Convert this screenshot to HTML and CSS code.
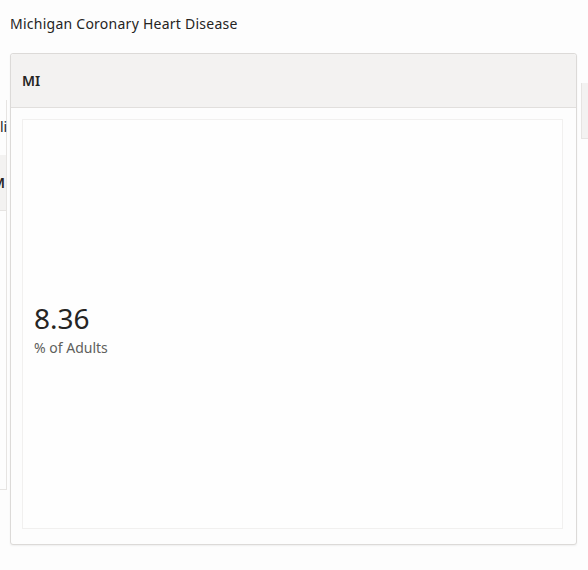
FILE: index.html
```html
<!DOCTYPE html>
<html lang="en">
<head>
  <meta charset="UTF-8" />
  <meta name="viewport" content="width=device-width, initial-scale=1" />
  <title>Michigan Coronary Heart Disease</title>
  <link rel="stylesheet" href="styles.css">
</head>
<body>
  <!-- panels of the report behind the popup -->
  <div class="backdrop">
    <div class="back-left">
      <span class="back-label">li</span>
      <div class="back-head"><span>M</span></div>
    </div>
    <div class="back-right"></div>
  </div>

  <h1 class="page-title">Michigan Coronary Heart Disease</h1>

  <div class="popup">
    <div class="popup-head">MI</div>
    <div class="popup-body">
      <div class="card">
        <div class="card-value">8.36</div>
        <div class="card-label">% of Adults</div>
      </div>
    </div>
  </div>
</body>
</html>
```

FILE: styles.css
```css
body {
  margin: 0;
  background: #fdfdfd;
  font-family: "Noto Sans", "Open Sans", sans-serif;
  color: #252423;
  width: 588px;
  height: 570px;
  position: relative;
  overflow: hidden;
}
.backdrop {
  position: absolute;
  inset: 0;
  z-index: 0;
}
.back-left {
  position: absolute;
  left: -100px;
  top: 100px;
  width: 106px;
  height: 389px;
  border-right: 1px solid #e6e4e2;
  border-bottom: 1px solid #e6e4e2;
}
.back-label {
  position: absolute;
  left: 100px;
  top: 17px;
  font-size: 14px;
}
.back-head {
  position: absolute;
  left: 0;
  right: 0;
  top: 55px;
  height: 55px;
  background: #f3f2f1;
  border-bottom: 1px solid #e6e4e2;
  font-size: 14px;
  font-weight: 600;
  line-height: 55px;
  text-align: right;
}
.back-head span {
  margin-right: 1px;
}
.back-right {
  position: absolute;
  left: 581px;
  top: 83px;
  width: 20px;
  height: 55px;
  background: #f3f2f1;
  border-left: 1px solid #e6e4e2;
  border-bottom: 1px solid #e6e4e2;
}
.page-title {
  position: relative;
  z-index: 1;
  margin: 0;
  padding: 14px 0 0 10px;
  height: 40px;
  box-sizing: border-box;
  font-size: 14px;
  font-weight: 400;
  letter-spacing: 0.25px;
  line-height: 20px;
}
.popup {
  position: relative;
  z-index: 1;
  margin: 13px 0 0 10px;
  width: 565px;
  height: 490px;
  background: #fdfdfd;
  border: 1px solid #dcdad8;
  border-radius: 3px;
  box-shadow: 0 1px 2px rgba(0,0,0,0.06);
  display: flex;
  flex-direction: column;
}
.popup-head {
  height: 53px;
  flex: none;
  background: #f3f2f1;
  border-bottom: 1px solid #e1dfdd;
  border-radius: 3px 3px 0 0;
  padding-left: 11px;
  font-size: 14px;
  font-weight: 600;
  line-height: 53px;
}
.popup-body {
  flex: 1;
  padding: 11px 13px 15px 11px;
  display: flex;
}
.card {
  flex: 1;
  border: 1px solid #f1f0ef;
  background: #fefefe;
  display: flex;
  flex-direction: column;
  justify-content: center;
  padding: 9px 11px 0;
}
.card-value {
  font-size: 28px;
  line-height: 36px;
  color: #252423;
}
.card-label {
  margin-top: 2px;
  font-size: 14px;
  line-height: 20px;
  color: #605e5c;
}
```
